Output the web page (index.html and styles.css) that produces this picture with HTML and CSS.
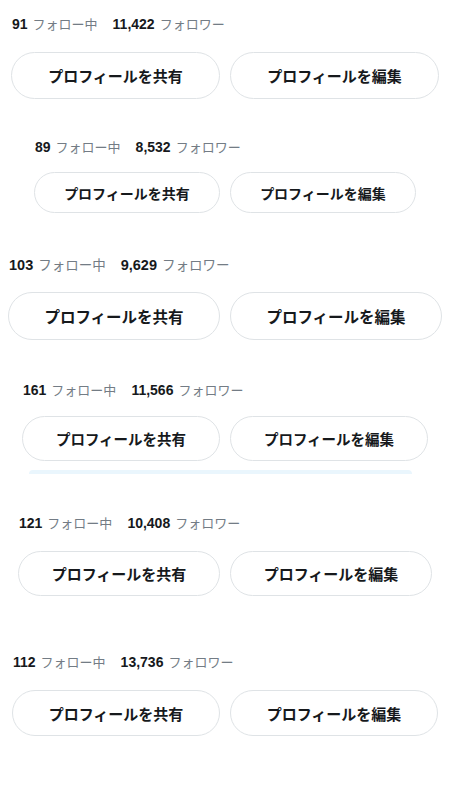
FILE: index.html
```html
<!DOCTYPE html>
<html lang="ja">
<head>
<meta charset="utf-8">
<title>プロフィール</title>
<link rel="stylesheet" href="styles.css">
</head>
<body>
<main class="page">
  <section class="profile p1">
    <div class="stats">
      <span class="stat"><b>91</b><span class="lbl">フォロー中</span></span>
      <span class="stat"><b>11,422</b><span class="lbl">フォロワー</span></span>
    </div>
    <div class="actions">
      <button class="btn">プロフィールを共有</button>
      <button class="btn">プロフィールを編集</button>
    </div>
  </section>

  <section class="profile p2">
    <div class="stats">
      <span class="stat"><b>89</b><span class="lbl">フォロー中</span></span>
      <span class="stat"><b>8,532</b><span class="lbl">フォロワー</span></span>
    </div>
    <div class="actions">
      <button class="btn">プロフィールを共有</button>
      <button class="btn">プロフィールを編集</button>
    </div>
  </section>

  <section class="profile p3">
    <div class="stats">
      <span class="stat"><b>103</b><span class="lbl">フォロー中</span></span>
      <span class="stat"><b>9,629</b><span class="lbl">フォロワー</span></span>
    </div>
    <div class="actions">
      <button class="btn">プロフィールを共有</button>
      <button class="btn">プロフィールを編集</button>
    </div>
  </section>

  <section class="profile p4">
    <div class="stats">
      <span class="stat"><b>161</b><span class="lbl">フォロー中</span></span>
      <span class="stat"><b>11,566</b><span class="lbl">フォロワー</span></span>
    </div>
    <div class="actions">
      <button class="btn">プロフィールを共有</button>
      <button class="btn">プロフィールを編集</button>
    </div>
    <div class="glow"></div>
  </section>

  <section class="profile p5">
    <div class="stats">
      <span class="stat"><b>121</b><span class="lbl">フォロー中</span></span>
      <span class="stat"><b>10,408</b><span class="lbl">フォロワー</span></span>
    </div>
    <div class="actions">
      <button class="btn">プロフィールを共有</button>
      <button class="btn">プロフィールを編集</button>
    </div>
  </section>

  <section class="profile p6">
    <div class="stats">
      <span class="stat"><b>112</b><span class="lbl">フォロー中</span></span>
      <span class="stat"><b>13,736</b><span class="lbl">フォロワー</span></span>
    </div>
    <div class="actions">
      <button class="btn">プロフィールを共有</button>
      <button class="btn">プロフィールを編集</button>
    </div>
  </section>
</main>
</body>
</html>
```

FILE: styles.css
```css
* { box-sizing: border-box; }

html, body {
  margin: 0;
  padding: 0;
  background: #ffffff;
}

body {
  font-family: "Liberation Sans", "Noto Sans CJK JP", sans-serif;
  color: #0f1419;
}

.page {
  width: 450px;
  padding-top: 14px;
}

.profile {
  margin: 0 auto;
  display: flex;
  flex-direction: column;
}

.stats {
  display: flex;
  align-items: center;
  gap: 15px;
  height: 20px;
  padding-left: 1px;
  font-size: 13px;
  line-height: 20px;
  white-space: nowrap;
}

.stat b {
  font-size: 14px;
  font-weight: 700;
  color: #16191c;
  margin-right: 5px;
}

.lbl {
  font-family: "Noto Sans CJK JP", sans-serif;
  color: #737c85;
  font-weight: 400;
}

.actions {
  display: flex;
  gap: 10px;
}

.btn {
  flex: 1;
  height: 47px;
  border: 1px solid #dfe3e6;
  border-radius: 999px;
  background: #ffffff;
  color: #16191c;
  font-family: "Noto Sans CJK JP", sans-serif;
  font-weight: 700;
  font-size: 15px;
  padding: 0;
  cursor: pointer;
}

/* block 1 */
.p1 { width: 428px; }
.p1 .actions { margin-top: 18px; }
.p1 .btn { height: 47px; }

/* block 2 */
.p2 { width: 382px; margin-top: 38px; }
.p2 .actions { margin-top: 15px; }
.p2 .btn { height: 41px; font-size: 14px; }

/* block 3 */
.p3 { width: 434px; margin-top: 42px; }
.p3 .stats { font-size: 13.5px; }
.p3 .stat b { font-size: 14.5px; }
.p3 .actions { margin-top: 17px; }
.p3 .btn { height: 48px; font-size: 15.5px; }

/* block 4 */
.p4 { width: 406px; margin-top: 40px; }
.p4 .actions { margin-top: 16px; }
.p4 .btn { height: 45px; font-size: 14.5px; }

.glow {
  height: 4px;
  margin: 9px 16px 0 7px;
  border-radius: 4px 4px 0 0;
  background: #eaf6fd;
}

/* block 5 */
.p5 { width: 414px; margin-top: 39px; }
.p5 .actions { margin-top: 18px; }
.p5 .btn { height: 45px; }

/* block 6 */
.p6 { width: 426px; margin-top: 56px; }
.p6 .actions { margin-top: 18px; }
.p6 .btn { height: 46px; }
```
